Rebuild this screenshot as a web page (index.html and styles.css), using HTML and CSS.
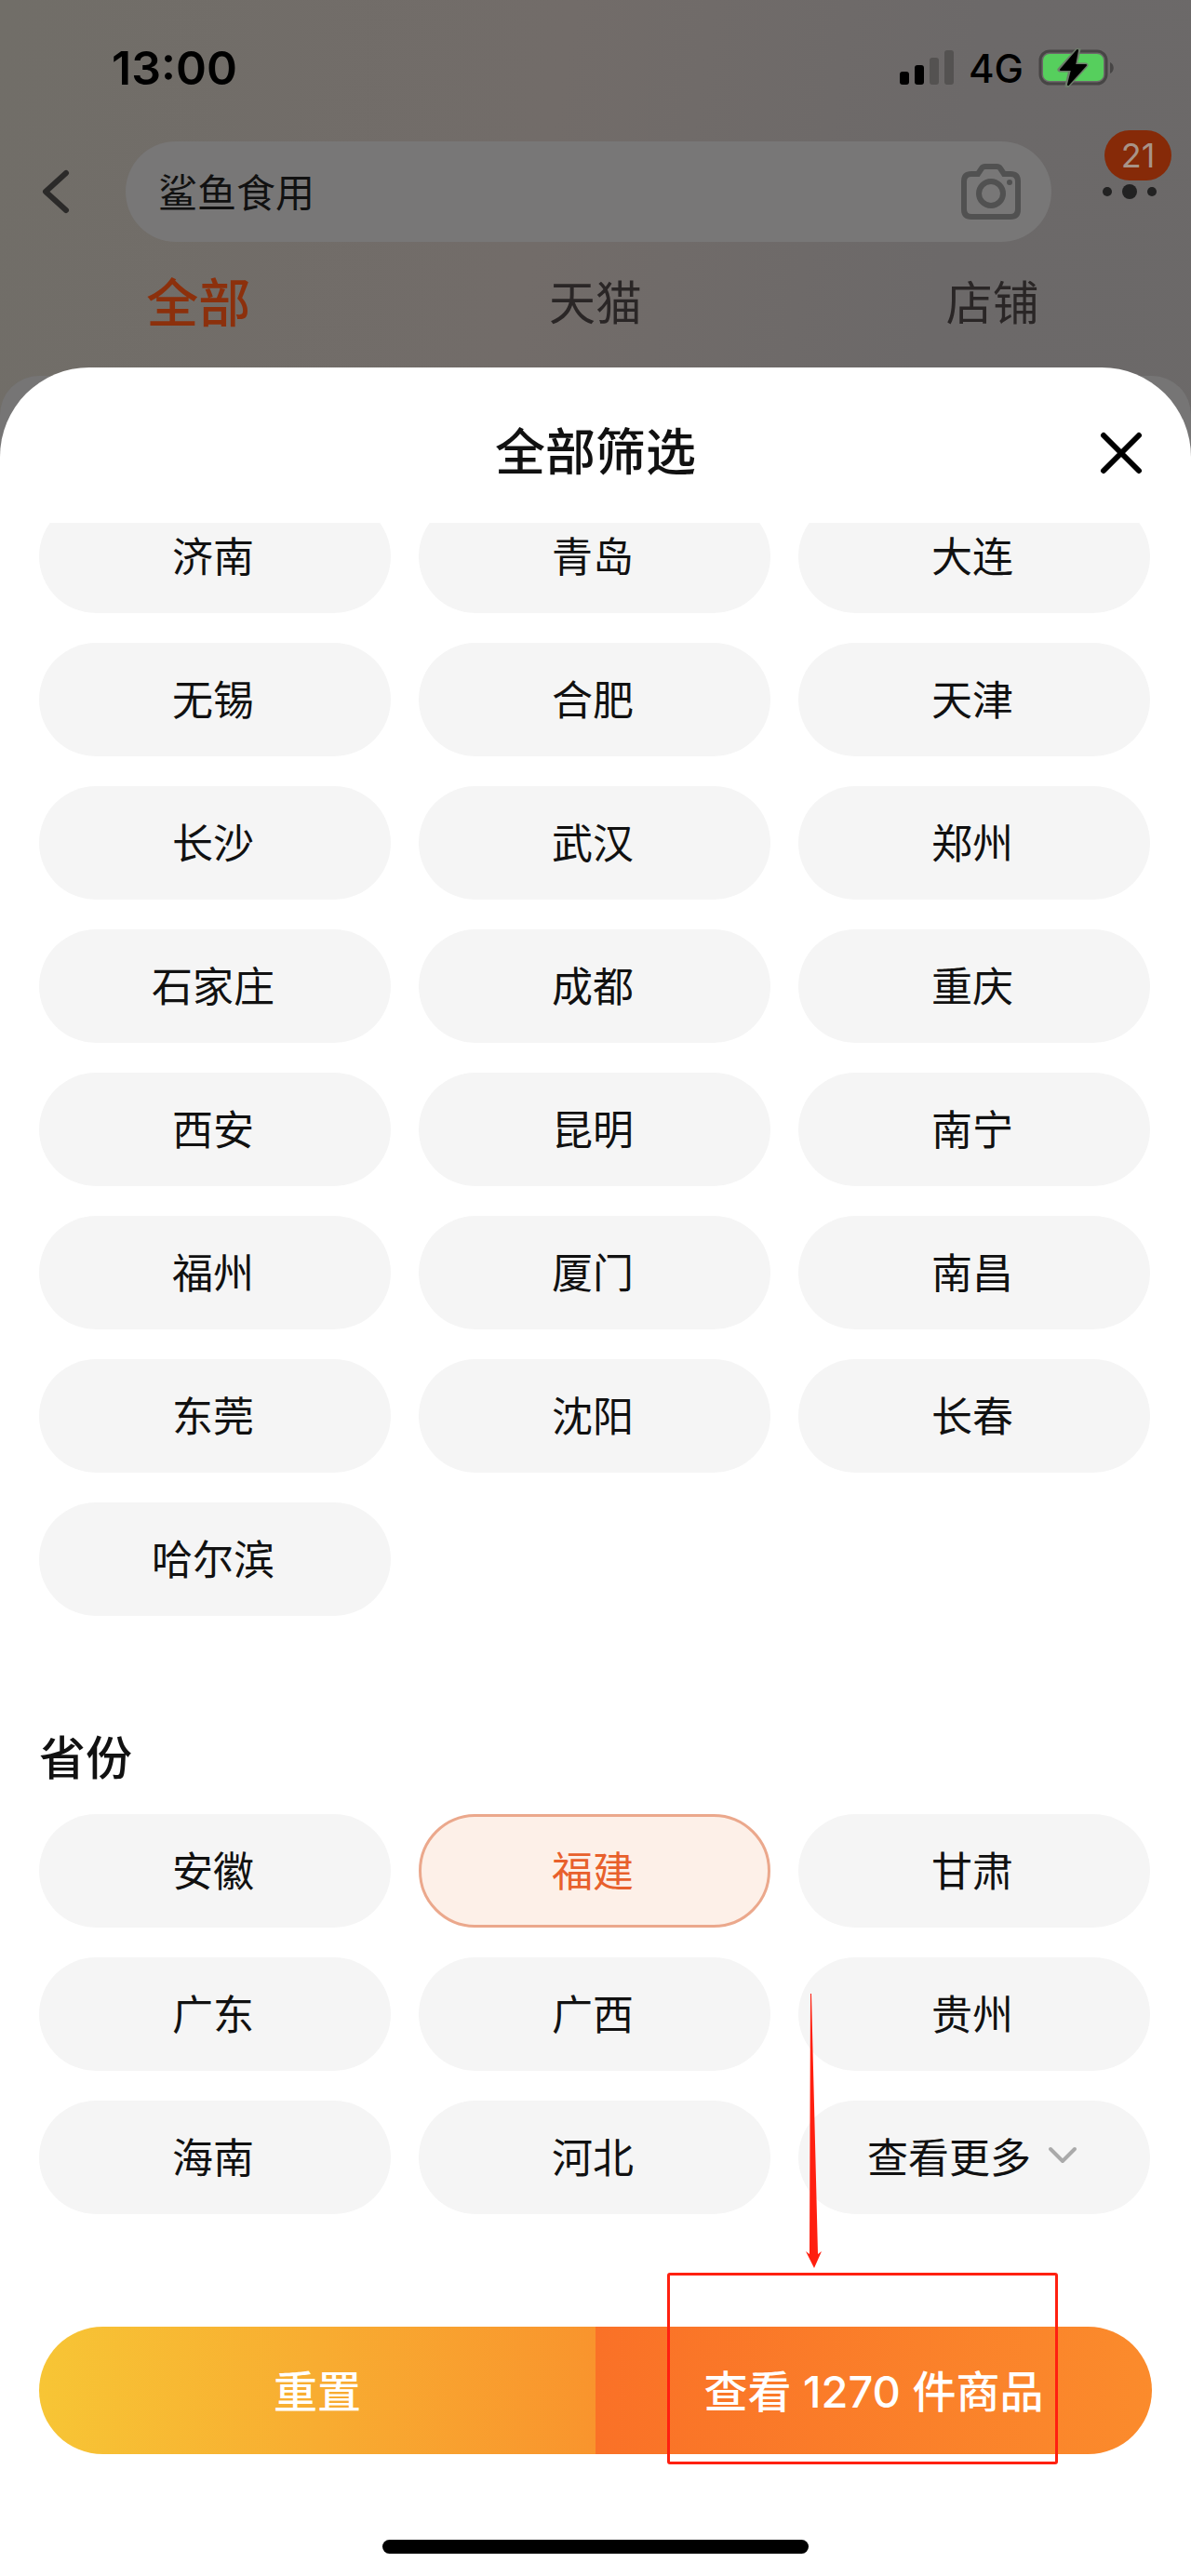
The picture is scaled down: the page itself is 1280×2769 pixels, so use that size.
FILE: index.html
```html
<!DOCTYPE html>
<html lang="zh-CN">

<head>
    <meta charset="UTF-8">
    <meta name="viewport" content="width=device-width, initial-scale=1.0">
    <title>全部筛选</title>
    <link rel="stylesheet" href="styles.css">
</head>

<body>
    <header class="header">
        <div class="status">
            <span class="time">13:00</span>
            <div class="status-right">
                <svg width="58" height="38" viewBox="0 0 58 38">
                    <rect x="0" y="23" width="10" height="14" rx="3" />
                    <rect x="16" y="16" width="10" height="21" rx="3" />
                    <rect x="32" y="8" width="10" height="29" rx="3" fill="#545251" />
                    <rect x="48" y="0" width="10" height="37" rx="3" fill="#545251" />
                </svg>
                <span class="network">4G</span>
                <svg width="82" height="42" viewBox="0 0 82 42">
                    <rect x="2" y="3" width="71" height="35" rx="10" fill="none" stroke="#474545" stroke-width="3" />
                    <rect x="5" y="6" width="65" height="29" rx="7" fill="#56cf5d" />
                    <path d="M77 15c5 2 5 10 0 12z" fill="#474545" />
                    <path d="M43 1L23 23h12l-4 17 20-22H39z" stroke="#6e7b6b" stroke-width="5" stroke-linejoin="round" />
                    <path d="M42 2L24 23h12l-4 16 19-21H39z" stroke="#000" stroke-width="2" stroke-linejoin="round" />
                </svg>
            </div>
        </div>
        <div class="search-row">
            <button class="icon-button back" aria-label="返回">
                <svg width="32" height="52" viewBox="0 0 32 52" fill="none" stroke="#2b2a29" stroke-width="6" stroke-linecap="round" stroke-linejoin="round">
                    <path d="M27 6L5 26l22 20" />
                </svg>
            </button>
            <div class="search">
                <input type="text" value="鲨鱼食用" aria-label="搜索">
                <button class="icon-button" aria-label="拍照搜索">
                    <svg width="64" height="60" viewBox="0 0 64 60" fill="none" stroke="#515151" stroke-width="6">
                        <path d="M11 11h7l4-6q1-2 4-2h12q3 0 4 2l4 6h7q8 0 8 8v30q0 8-8 8H11q-8 0-8-8V19q0-8 8-8z" />
                        <circle cx="32" cy="32" r="13" />
                        <circle cx="52" cy="20" r="3" fill="#515151" stroke="none" />
                    </svg>
                </button>
            </div>
            <button class="icon-button more" aria-label="更多">
                <svg width="60" height="18" viewBox="0 0 60 18" fill="#222">
                    <circle cx="6" cy="9" r="5" />
                    <circle cx="30" cy="9" r="8" />
                    <circle cx="54" cy="9" r="5" />
                </svg>
                <span class="badge">21</span>
            </button>
        </div>
        <nav class="tabs">
            <a href="#" class="active">全部</a>
            <a href="#">天猫</a>
            <a href="#">店铺</a>
        </nav>
    </header>

    <main class="sheet">
        <div class="sheet-title">
            <h1>全部筛选</h1>
            <button class="icon-button close" aria-label="关闭">
                <svg width="46" height="46" viewBox="0 0 46 46" fill="none" stroke="#000" stroke-width="6" stroke-linecap="round">
                    <path d="M4 4l38 38M42 4L4 42" />
                </svg>
            </button>
        </div>

        <div class="filters">
            <section class="chips cities">
                <button>济南</button>
                <button>青岛</button>
                <button>大连</button>
                <button>无锡</button>
                <button>合肥</button>
                <button>天津</button>
                <button>长沙</button>
                <button>武汉</button>
                <button>郑州</button>
                <button>石家庄</button>
                <button>成都</button>
                <button>重庆</button>
                <button>西安</button>
                <button>昆明</button>
                <button>南宁</button>
                <button>福州</button>
                <button>厦门</button>
                <button>南昌</button>
                <button>东莞</button>
                <button>沈阳</button>
                <button>长春</button>
                <button>哈尔滨</button>
            </section>

            <h2>省份</h2>
            <section class="chips">
                <button>安徽</button>
                <button class="selected" aria-pressed="true">福建</button>
                <button>甘肃</button>
                <button>广东</button>
                <button>广西</button>
                <button>贵州</button>
                <button>海南</button>
                <button>河北</button>
                <button class="show-more">查看更多
                    <svg width="32" height="20" viewBox="0 0 32 20" fill="none" stroke="#aaa" stroke-width="4" stroke-linecap="round" stroke-linejoin="round">
                        <path d="M3 3l13 13L29 3" />
                    </svg>
                </button>
            </section>
        </div>

        <div class="actions">
            <button class="reset">重置</button>
            <button class="submit">查看 1270 件商品
                <svg class="arrow" width="20" height="296" viewBox="0 0 20 296" fill="#ff2010">
                    <path d="M6 1h1l7 280 4-3-8 18-9-18 4 3z" />
                </svg>
                <span class="mark"></span>
            </button>
        </div>
        <div class="home-bar"></div>
    </main>
</body>

</html>
```

FILE: styles.css
```css
* {
    box-sizing: border-box;
}

body {
    margin: 0;
    font-family: Inter, "Noto Sans CJK SC", sans-serif;
    color: #111;
    background: linear-gradient(100deg, #716e68 0%, #726c69 35%, #6c6969 60%, #6b6968 100%);
}

button {
    border: none;
    padding: 0;
    background: none;
    font-family: inherit;
    color: inherit;
}

svg {
    display: block;
}

.icon-button {
    display: flex;
    align-items: center;
    justify-content: center;
}

/* top of the page, dimmed */
.status {
    display: flex;
    justify-content: space-between;
    align-items: center;
    height: 146px;
    padding: 0 82px 0 120px;
    color: #000;
}

.time {
    font-size: 50px;
    font-weight: 600;
}

.status-right {
    display: flex;
    align-items: center;
    gap: 16px;
}

.network {
    font-size: 42px;
    font-weight: 500;
}

.search-row {
    display: flex;
    align-items: center;
    height: 108px;
    margin-top: 6px;
}

.back {
    width: 135px;
    padding-right: 16px;
}

.search {
    flex: 1;
    display: flex;
    align-items: center;
    height: 108px;
    padding: 0 33px 0 35px;
    border-radius: 54px;
    background: #787777;
}

.search input {
    flex: 1;
    min-width: 0;
    padding: 0 0 4px;
    border: none;
    outline: none;
    background: none;
    font-family: inherit;
    font-size: 42px;
    color: #111;
}

.more {
    position: relative;
    width: 150px;
    padding-left: 18px;
}

.badge {
    position: absolute;
    top: -57px;
    left: 57px;
    width: 72px;
    border-radius: 27px;
    background: #862a08;
    color: #a89488;
    font-size: 36px;
    line-height: 54px;
}

.tabs {
    display: grid;
    grid-template-columns: repeat(3, 1fr);
    height: 135px;
    padding-bottom: 4px;
    align-items: center;
    text-align: center;
}

.tabs a {
    color: #2a2626;
    font-size: 50px;
    line-height: 80px;
    text-decoration: none;
}

.tabs .active {
    color: #8c300c;
    font-size: 56px;
    font-weight: 500;
}

/* filter sheet */
.sheet {
    position: relative;
    z-index: 0;
    padding: 0 42px 24px;
}

.sheet::before,
.sheet::after {
    content: "";
    position: absolute;
    top: 0;
    right: 0;
    bottom: 0;
    left: 0;
    z-index: -1;
    border-radius: 96px 96px 0 0;
    background: #fff;
}

/* edge of the card under the sheet */
.sheet::before {
    top: 9px;
    border-radius: 42px 42px 0 0;
    background: #767575;
}

.sheet-title {
    display: grid;
    grid-template-columns: 1fr auto 1fr;
    align-items: center;
    height: 167px;
    padding-top: 16px;
}

.sheet-title h1 {
    grid-column: 2;
    margin: 0;
    font-size: 54px;
    font-weight: 500;
    line-height: 80px;
}

.close {
    justify-self: end;
    margin-right: 10px;
}

.filters {
    overflow: hidden;
    padding-right: 2px;
}

.chips {
    display: grid;
    grid-template-columns: repeat(3, 1fr);
    gap: 32px 30px;
}

/* the first row is scrolled partly out of view */
.cities {
    margin-top: -25px;
}

.chips button {
    height: 122px;
    padding: 0 4px 4px 0;
    border-radius: 61px;
    background: #f5f5f5;
    font-size: 44px;
}

.chips .selected {
    border: 3px solid #eba88c;
    background: #fdf0e8;
    color: #e8602c;
}

.chips .show-more {
    display: flex;
    align-items: center;
    justify-content: center;
    gap: 18px;
}

h2 {
    margin: 113px 0 20px;
    font-size: 50px;
    font-weight: 500;
    line-height: 80px;
}

.actions {
    display: flex;
    margin-top: 121px;
}

.actions button {
    flex: 1;
    height: 137px;
    padding-bottom: 5px;
    color: #fff;
    font-size: 47px;
    font-weight: 500;
}

.reset {
    border-radius: 69px 0 0 69px;
    background: linear-gradient(90deg, #f7c535, #f9942d);
}

.submit {
    position: relative;
    border-radius: 0 69px 69px 0;
    background: linear-gradient(90deg, #fa7127, #fb8b2c);
}

/* red annotation over the button */
.mark {
    position: absolute;
    top: -58px;
    left: 77px;
    width: 420px;
    height: 206px;
    border: 3px solid #ff2010;
    border-radius: 3px;
}

.arrow {
    position: absolute;
    top: -359px;
    left: 225px;
}

.home-bar {
    width: 458px;
    height: 15px;
    margin: 92px auto 0;
    border-radius: 8px;
    background: #000;
}
```
